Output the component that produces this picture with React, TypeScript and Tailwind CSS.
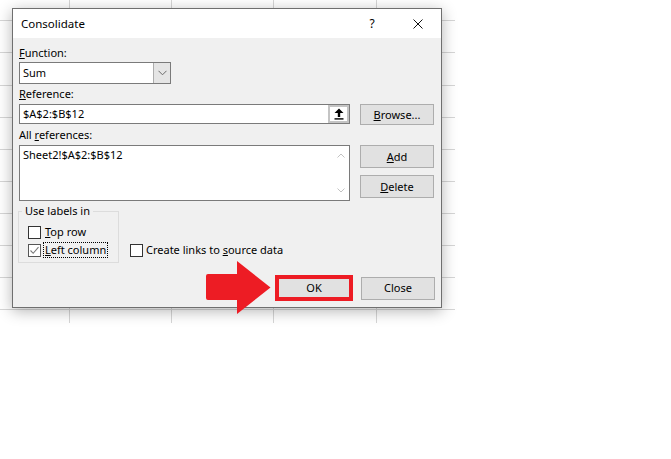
import React from 'react';

const colW = ['w-[70px]', 'w-[102px]', 'w-[102px]', 'w-[103px]', 'w-[78px]'];
const rowH = ['h-[21px]', 'h-[32px]', 'h-[33px]', 'h-[32px]', 'h-[32px]', 'h-[32px]', 'h-[32px]', 'h-[32px]', 'h-[32px]', 'h-[32px]', 'h-[13px]'];

function SheetGrid() {
  return (
    <div className="flex w-[455px] flex-col bg-white">
      {rowH.map((h, r) => (
        <div key={r} className={`flex ${h}`}>
          {colW.map((w, c) => (
            <div
              key={c}
              className={`${w} h-full border-[#d6d6d6] ${c < colW.length - 1 ? 'border-r' : ''} ${r < rowH.length - 1 ? 'border-b' : ''}`}
            />
          ))}
        </div>
      ))}
    </div>
  );
}

function Checkbox({ checked }: { checked?: boolean }) {
  return (
    <div className={`flex h-[13px] w-[13px] items-center justify-center border bg-white ${checked ? 'border-[#555]' : 'border-[#333]'}`}>
      {checked && (
        <svg width="11" height="11" viewBox="0 0 11 11">
          <path d="M1.5 5.5 L4.2 8.3 L9.5 2.2" fill="none" stroke="#7a7a7a" strokeWidth="1.1" />
        </svg>
      )}
    </div>
  );
}

function Btn({ children, h = 'h-[23px]' }: { children: React.ReactNode; h?: string }) {
  return (
    <div className={`flex w-[74px] ${h} items-center justify-center border border-[#adadad] bg-[#e1e1e1]`}>
      {children}
    </div>
  );
}

export default function App() {
  return (
    <div className="relative h-[459px] w-[671px] overflow-hidden bg-white font-['Noto_Sans',sans-serif] text-[11px] leading-4 text-black">
      <SheetGrid />

      {/* Dialog */}
      <div className="absolute left-[12px] top-[8px] flex h-[300px] w-[430px] flex-col border border-[#6f6f6f] bg-[#f0f0f0] shadow-[0_3px_14px_rgba(0,0,0,0.3)]">
        {/* Title bar */}
        <div className="flex h-[29px] items-center bg-white">
          <div className="pl-[8px] text-[11.5px]">Consolidate</div>
          <div className="ml-auto flex h-full">
            <div className="flex h-full w-[46px] items-center justify-center text-[12px]">?</div>
            <div className="flex h-full w-[46px] items-center justify-center">
              <svg width="10" height="10" viewBox="0 0 10 10">
                <path d="M0.5 0.5 L9.5 9.5 M9.5 0.5 L0.5 9.5" stroke="#111" strokeWidth="1" />
              </svg>
            </div>
          </div>
        </div>

        {/* Body */}
        <div className="flex flex-col pl-[6px] pr-[6px] pt-[7px]">
          <div className="h-4"><span className="underline">F</span>unction:</div>
          <div className="mt-px flex h-[22px] w-[152px] border border-[#7a7a7a] bg-white">
            <div className="flex-1 pl-[3px] leading-[20px]">Sum</div>
            <div className="flex w-[17px] items-center justify-center border-l border-[#adadad] bg-[#e5e5e5]">
              <svg width="9" height="6" viewBox="0 0 9 6">
                <path d="M0.5 0.8 L4.5 4.8 L8.5 0.8" fill="none" stroke="#6a6a6a" strokeWidth="1" />
              </svg>
            </div>
          </div>

          <div className="mt-[2px] h-4"><span className="underline">R</span>eference:</div>
          <div className="mt-[2px] flex items-start">
            <div className="flex h-[20px] w-[331px] border border-[#7a7a7a] bg-white">
              <div className="flex-1 pl-[3px] leading-[18px]">$A$2:$B$12</div>
              <div className="flex w-[21px] items-center justify-center border-2 border-[#c4c4c4] bg-white">
                <svg width="10" height="12" viewBox="0 0 10 12">
                  <path d="M5 0.5 L9.5 5 L6.2 5 L6.2 9 L3.8 9 L3.8 5 L0.5 5 Z" fill="#000" />
                  <rect x="0.5" y="10.2" width="9" height="1.4" fill="#000" />
                </svg>
              </div>
            </div>
            <div className="ml-[10px]">
              <Btn h="h-[21px]"><span className="underline">B</span>rowse...</Btn>
            </div>
          </div>

          <div className="mt-[2px] h-4">All <span className="underline">r</span>eferences:</div>
          <div className="mt-[2px] flex items-start">
            <div className="flex h-[56px] w-[331px] border border-[#7a7a7a] bg-white">
              <div className="flex-1 pl-[3px] pt-px">Sheet2!$A$2:$B$12</div>
              <div className="flex w-[17px] flex-col items-center justify-between py-[7px]">
                <svg width="8" height="5" viewBox="0 0 8 5">
                  <path d="M0.5 4.5 L4 1 L7.5 4.5" fill="none" stroke="#c2c2c2" strokeWidth="1" />
                </svg>
                <svg width="8" height="5" viewBox="0 0 8 5">
                  <path d="M0.5 0.5 L4 4 L7.5 0.5" fill="none" stroke="#c2c2c2" strokeWidth="1" />
                </svg>
              </div>
            </div>
            <div className="ml-[10px] flex flex-col gap-[7px]">
              <Btn><span className="underline">A</span>dd</Btn>
              <Btn><span className="underline">D</span>elete</Btn>
            </div>
          </div>

          <div className="mt-[2px] flex items-end">
            <fieldset className="-ml-px w-[101px] border border-[#dcdcdc] pb-[3px] pt-[4px]">
              <legend className="ml-[3px] px-[3px] leading-4">Use labels in</legend>
              <div className="flex h-[18px] items-center pl-[9px]">
                <Checkbox />
                <span className="ml-[2px] border border-transparent px-px leading-[14px]"><span className="underline">T</span>op row</span>
              </div>
              <div className="flex h-[18px] items-center pl-[9px]">
                <Checkbox checked />
                <span className="ml-[2px] border border-dotted border-black px-px leading-[14px]"><span className="underline">L</span>eft column</span>
              </div>
            </fieldset>
            <div className="mb-[4px] ml-[11px] flex h-[18px] items-center">
              <Checkbox />
              <span className="ml-[3px]">Create links to <span className="underline">s</span>ource data</span>
            </div>
          </div>

          <div className="mt-[12px] flex items-center justify-end">
            <div className="flex h-[26px] w-[78px] items-center justify-center border-4 border-[#ed1c24] bg-[#e1e1e1]">OK</div>
            <div className="ml-[8px]">
              <Btn>Close</Btn>
            </div>
          </div>
        </div>
      </div>

      {/* Red arrow pointing at OK */}
      <svg className="absolute left-[206px] top-[261px]" width="66" height="53" viewBox="0 0 66 53">
        <path d="M2 13 L31 13 L31 0 L64.5 26.5 L31 53 L31 39 L2 39 Q0 39 0 37 L0 15 Q0 13 2 13 Z" fill="#ed1c24" />
      </svg>
    </div>
  );
}
